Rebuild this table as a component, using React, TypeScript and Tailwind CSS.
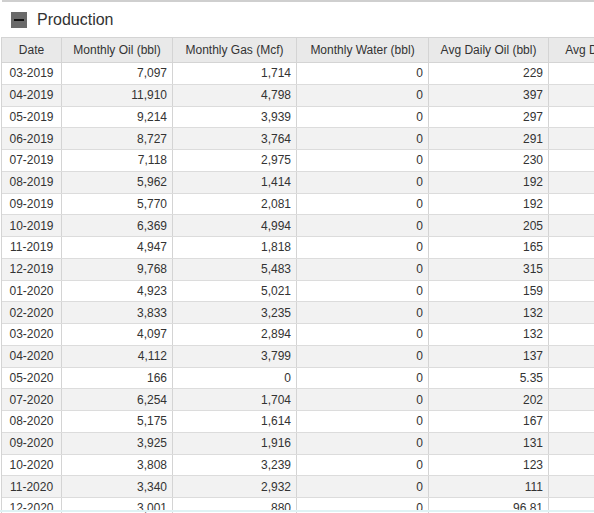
import React from "react";

type Row = {
    date: string;
    oil: string;
    gas: string;
    water: string;
    avgOil: string;
    avgGas: string;
};

const rows: Row[] = [
    { date: "03-2019", oil: "7,097", gas: "1,714", water: "0", avgOil: "229", avgGas: "55.29" },
    { date: "04-2019", oil: "11,910", gas: "4,798", water: "0", avgOil: "397", avgGas: "160" },
    { date: "05-2019", oil: "9,214", gas: "3,939", water: "0", avgOil: "297", avgGas: "127" },
    { date: "06-2019", oil: "8,727", gas: "3,764", water: "0", avgOil: "291", avgGas: "125" },
    { date: "07-2019", oil: "7,118", gas: "2,975", water: "0", avgOil: "230", avgGas: "96.0" },
    { date: "08-2019", oil: "5,962", gas: "1,414", water: "0", avgOil: "192", avgGas: "45.6" },
    { date: "09-2019", oil: "5,770", gas: "2,081", water: "0", avgOil: "192", avgGas: "69.4" },
    { date: "10-2019", oil: "6,369", gas: "4,994", water: "0", avgOil: "205", avgGas: "161" },
    { date: "11-2019", oil: "4,947", gas: "1,818", water: "0", avgOil: "165", avgGas: "60.6" },
    { date: "12-2019", oil: "9,768", gas: "5,483", water: "0", avgOil: "315", avgGas: "177" },
    { date: "01-2020", oil: "4,923", gas: "5,021", water: "0", avgOil: "159", avgGas: "162" },
    { date: "02-2020", oil: "3,833", gas: "3,235", water: "0", avgOil: "132", avgGas: "112" },
    { date: "03-2020", oil: "4,097", gas: "2,894", water: "0", avgOil: "132", avgGas: "93.4" },
    { date: "04-2020", oil: "4,112", gas: "3,799", water: "0", avgOil: "137", avgGas: "127" },
    { date: "05-2020", oil: "166", gas: "0", water: "0", avgOil: "5.35", avgGas: "0" },
    { date: "07-2020", oil: "6,254", gas: "1,704", water: "0", avgOil: "202", avgGas: "55.0" },
    { date: "08-2020", oil: "5,175", gas: "1,614", water: "0", avgOil: "167", avgGas: "52.1" },
    { date: "09-2020", oil: "3,925", gas: "1,916", water: "0", avgOil: "131", avgGas: "63.9" },
    { date: "10-2020", oil: "3,808", gas: "3,239", water: "0", avgOil: "123", avgGas: "104" },
    { date: "11-2020", oil: "3,340", gas: "2,932", water: "0", avgOil: "111", avgGas: "97.7" },
    { date: "12-2020", oil: "3,001", gas: "880", water: "0", avgOil: "96.81", avgGas: "28.4" },
];

const cols = [
    { key: "date", label: "Date", w: "w-[60px]" },
    { key: "oil", label: "Monthly Oil (bbl)", w: "w-[111px]" },
    { key: "gas", label: "Monthly Gas (Mcf)", w: "w-[124px]" },
    { key: "water", label: "Monthly Water (bbl)", w: "w-[132px]" },
    { key: "avgOil", label: "Avg Daily Oil (bbl)", w: "w-[120px]" },
    { key: "avgGas", label: "Avg Daily Gas (Mcf)", w: "w-[140px]" },
] as const;

export default function App() {
    return (
        <div className="relative h-[513px] w-[594px] overflow-hidden bg-white font-['Liberation_Sans',Arial,sans-serif] text-[#333]">
            <div className="border-t-2 border-[#cfcfcf] ml-[2px]">
                <div className="flex items-center h-[35px] pl-[9px] pt-px gap-[10px]">
                    <div className="w-4 h-4 bg-[#6a6a6a] flex items-center justify-center">
                        <div className="w-[10px] h-[2px] bg-[#111]" />
                    </div>
                    <span className="text-[16px] leading-none">Production</span>
                </div>
            </div>

            <div className="ml-px border-l border-[#d4d4d4] w-max text-[12px]">
                <div className="flex h-[26px] bg-[#e9e9e9] border-y border-[#d4d4d4]">
                    {cols.map((c) => (
                        <div
                            key={c.key}
                            className={`${c.w} shrink-0 flex items-center justify-center border-r border-[#d4d4d4] whitespace-nowrap`}
                        >
                            {c.label}
                        </div>
                    ))}
                </div>
                {rows.map((r, i) => (
                    <div
                        key={r.date}
                        className={`flex h-[21.75px] border-b border-[#dcdcdc] ${i % 2 === 1 ? "bg-[#f2f2f2]" : "bg-white"}`}
                    >
                        {cols.map((c) => (
                            <div
                                key={c.key}
                                className={`${c.w} shrink-0 flex items-center border-r border-[#d4d4d4] whitespace-nowrap ${
                                    c.key === "date" ? "justify-center" : "justify-end pr-[5px]"
                                }`}
                            >
                                {r[c.key]}
                            </div>
                        ))}
                    </div>
                ))}
            </div>

            <div className="absolute left-0 right-0 top-[510px] h-[2px] bg-[#dff2f4]" />
        </div>
    );
}
